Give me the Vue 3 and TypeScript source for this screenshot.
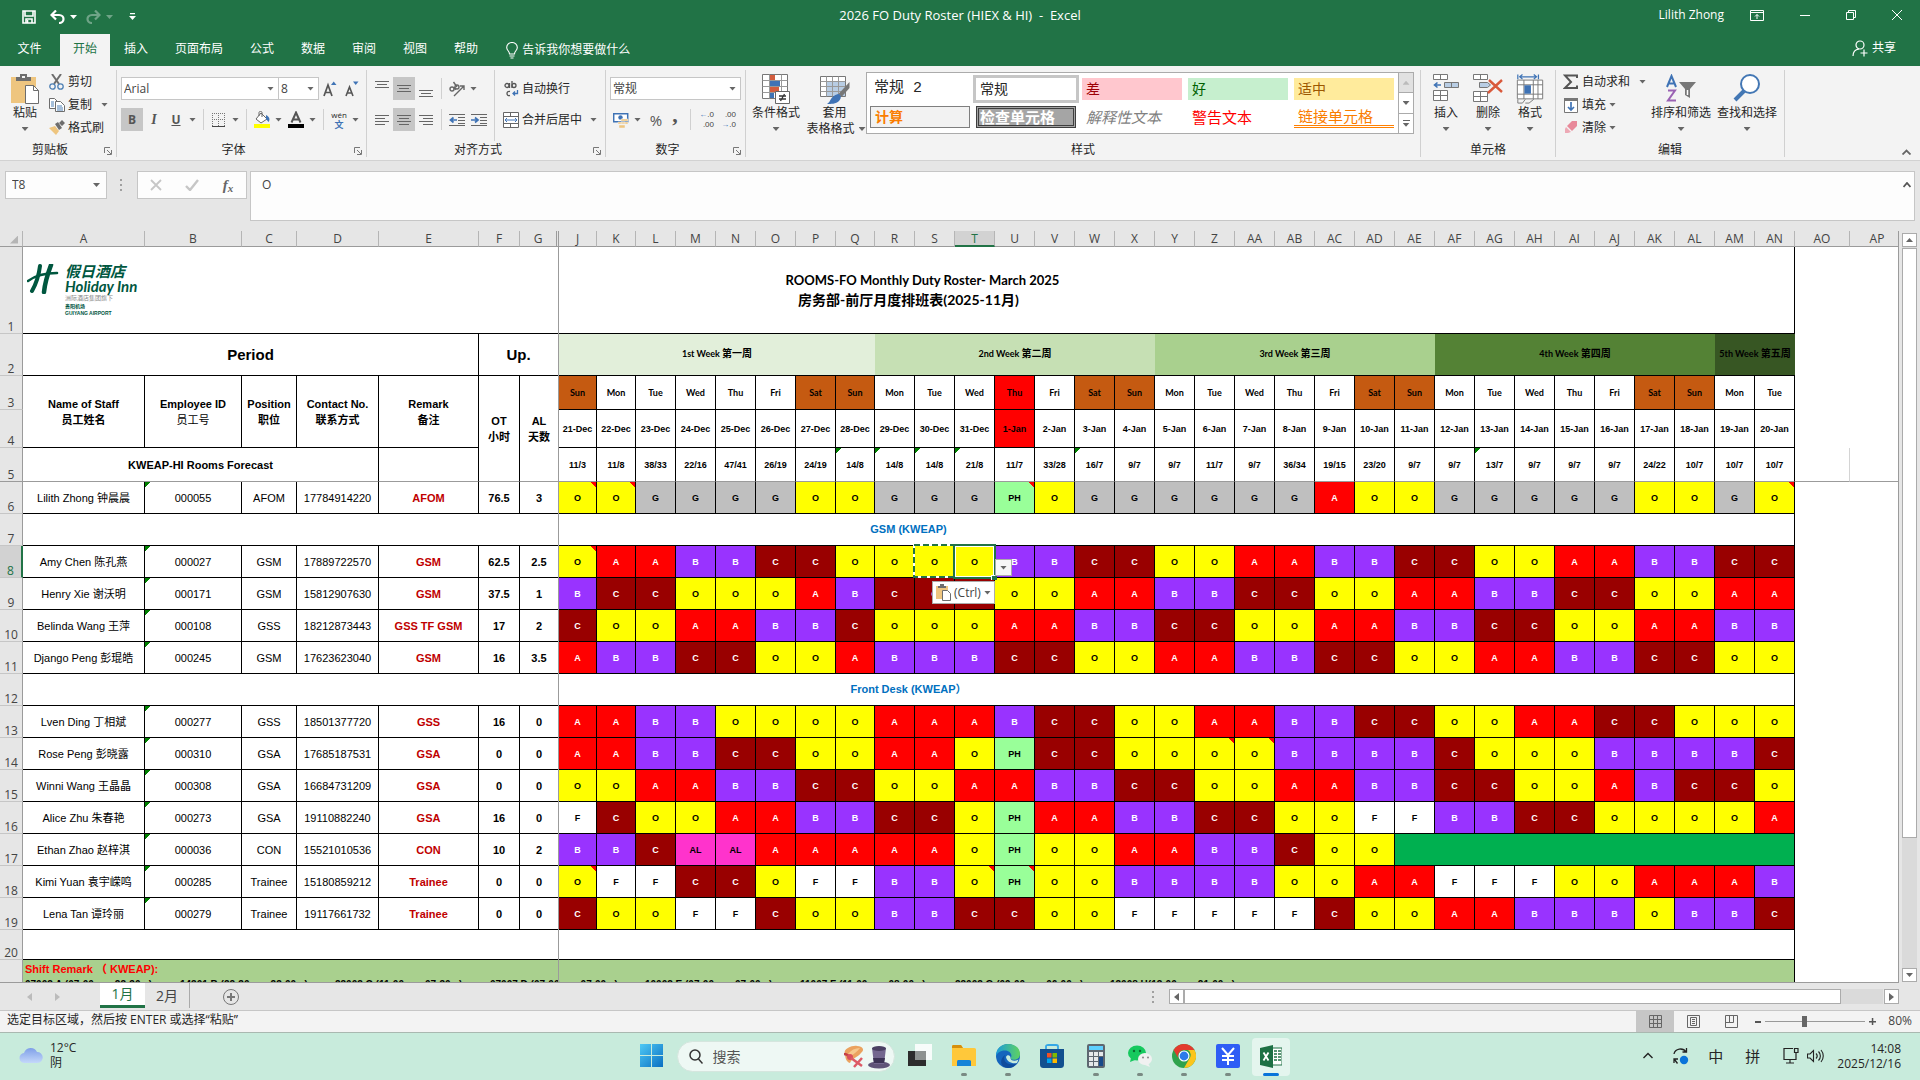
<script setup lang="ts">
import { ref } from 'vue'

interface Staff {
  row: number
  name: string
  id: string
  position: string
  phone: string
  remark: string
  ot: string
  al: string
  shifts: string[]
  notes: number[]
}

interface Column {
  key: string
  width: number
}

const leadColumns: Column[] = [
  { key: 'A', width: 122 }, { key: 'B', width: 97 }, { key: 'C', width: 55 }, { key: 'D', width: 82 },
  { key: 'E', width: 100 }, { key: 'F', width: 41 }, { key: 'G', width: 39 },
]
const dayKeys = 'J K L M N O P Q R S T U V W X Y Z AA AB AC AD AE AF AG AH AI AJ AK AL AM AN'.split(' ')
const dayColumns: Column[] = dayKeys.map((key) => ({
  key,
  width: key === 'J' ? 38 : key === 'K' || key === 'Q' ? 39 : 40,
}))
const columns = [...leadColumns, ...dayColumns, { key: 'AO', width: 55 }]

const weekdayNames = ['Sun', 'Mon', 'Tue', 'Wed', 'Thu', 'Fri', 'Sat']
const days = dayKeys.map((key, i) => {
  const weekday = weekdayNames[i % 7]
  const date = i < 11 ? `${21 + i}-Dec` : `${i - 10}-Jan`
  return { key, weekday, date, holiday: i === 11, weekend: weekday === 'Sat' || weekday === 'Sun' }
})

const weeks = [
  { text: '1st Week', zh: '第一周', span: 8, cls: 'w1' },
  { text: '2nd Week', zh: '第二周', span: 7, cls: 'w2' },
  { text: '3rd Week', zh: '第三周', span: 7, cls: 'w3' },
  { text: '4th Week', zh: '第四周', span: 7, cls: 'w4' },
  { text: '5th Week', zh: '第五周', span: 2, cls: 'w5' },
]

const forecast = ('11/3 11/8 38/33 22/16 47/41 26/19 24/19 14/8 14/8 14/8 21/8 11/7 33/28 16/7 9/7 9/7 11/7 9/7 ' +
  '36/34 19/15 23/20 9/7 9/7 13/7 9/7 9/7 9/7 24/22 10/7 10/7 10/7').split(' ')
const forecastFlags = [7, 8, 9, 10, 13, 23]

function staff(row: number, name: string, id: string, position: string, phone: string, remark: string,
  ot: string, al: string, shifts: string, notes: number[] = []): Staff {
  return { row, name, id, position, phone, remark, ot, al, shifts: shifts.split(' '), notes }
}

const lines: (Staff | { row: number; section: string })[] = [
  staff(6, 'Lilith Zhong 钟晨晨', '000055', 'AFOM', '17784914220', 'AFOM', '76.5', '3',
    'O O G G G G O O G G G PH O G G G G G G A O O G G G G G O O G O', [0, 1, 11, 30]),
  { row: 7, section: 'GSM (KWEAP)' },
  staff(8, 'Amy Chen 陈孔燕', '000027', 'GSM', '17889722570', 'GSM', '62.5', '2.5',
    'O A A B B C C O O O O B B C C O O A A B B C C O O A A B B C C', [0]),
  staff(9, 'Henry Xie 谢沃明', '000171', 'GSM', '15812907630', 'GSM', '37.5', '1',
    'B C C O O O A B C C C O O A A B B C C O O A A B B C C O O A A'),
  staff(10, 'Belinda Wang 王萍', '000108', 'GSS', '18212873443', 'GSS TF GSM', '17', '2',
    'C O O A A B B C O O O A A B B C C O O A A B B C C O O A A B B'),
  staff(11, 'Django Peng 彭琨皓', '000245', 'GSM', '17623623040', 'GSM', '16', '3.5',
    'A B B C C O O A B B B C C O O A A B B C C O O A A B B C C O O'),
  { row: 12, section: 'Front Desk (KWEAP）' },
  staff(13, 'Lven Ding 丁相斌', '000277', 'GSS', '18501377720', 'GSS', '16', '0',
    'A A B B O O O O A A A B C C O O A A B B C C O O A A C C O O O'),
  staff(14, 'Rose Peng 彭晓露', '000310', 'GSA', '17685187531', 'GSA', '0', '0',
    'A A B B C C O O A A O PH C C O O O O B B B B C O O O B B B B C', [16, 17]),
  staff(15, 'Winni Wang 王晶晶', '000308', 'GSA', '16684731209', 'GSA', '0', '0',
    'O O A A B B C C O O A A B B C C O O A A B B C C O O A B C C O'),
  staff(16, 'Alice Zhu 朱春艳', '000273', 'GSA', '19110882240', 'GSA', '16', '0',
    'F C O O A A B B C C O PH A A B B C C O O F F B B C C O O O O A'),
  staff(17, 'Ethan Zhao 赵梓淇', '000036', 'CON', '15521010536', 'CON', '10', '2',
    'B B C AL AL A A A A A O PH O O A A B B C O O'),
  staff(18, 'Kimi Yuan 袁宇嵘鸣', '000285', 'Trainee', '15180859212', 'Trainee', '0', '0',
    'O F F C C O F F B B O PH O O B B B B O O A A F F F O O A A A B', [0, 10, 11]),
  staff(19, 'Lena Tan 谭玲丽', '000279', 'Trainee', '19117661732', 'Trainee', '0', '0',
    'C O O F F C O O B B C C O O F F F F F C O O A A B B B O B B C'),
]

const shiftCodes = [
  '07003 A (07:00  —  23:30   )', '14301 B (22:30  —  23:00   )', '23003 C (11:00  —  07:30   )', '07007 D (07:00  —  07:00   )',
  '10003 E (07:00  —  07:00   )', '11007 F (11:00  —  08:00   )', '23003 G (09:00  —  06:00   )', '13008 H(13:00  —  21:00   )',
]

const tabs = ['插入', '页面布局', '公式', '数据', '审阅', '视图', '帮助']
const cellStyles = [
  { text: '常规 2', cls: 'plain2' }, { text: '常规', cls: 'normal' }, { text: '差', cls: 'bad' },
  { text: '好', cls: 'good' }, { text: '适中', cls: 'neutral' }, { text: '计算', cls: 'calc' },
  { text: '检查单元格', cls: 'check' }, { text: '解释性文本', cls: 'explain' },
  { text: '警告文本', cls: 'warn' }, { text: '链接单元格', cls: 'linked' },
]

const formula = ref('O')
const zoom = ref(39)
const keyword = ref('')
</script>

<template>
  <div class="app">
    <header class="title-bar">
      <div class="quick">
        <button aria-label="保存"><svg width="14" height="14" viewBox="0 0 14 14" fill="none" stroke="#fff" stroke-width="1.6"><path d="M1 1h12v12H1zM3 1v5h8V1M4 13V9h6v4" /><path d="M5.5 10v3" /></svg></button>
        <button aria-label="撤消" class="undo"><svg width="15" height="14" viewBox="0 0 15 14" fill="none" stroke="#fff" stroke-width="2.200"><path d="M6 .5L1.500 5 6 9.500M1.500 5H9c6 0 6 8 0 8" /></svg><i class="dd white"></i></button>
        <button aria-label="恢复" class="redo"><svg width="15" height="14" viewBox="0 0 15 14" fill="none" stroke="#fff" stroke-width="2.200"><path d="M9 .5L13.500 5 9 9.500M13.500 5H6c-6 0-6 8 0 8" /></svg><i class="dd white"></i></button>
        <button aria-label="自定义快速访问工具栏" class="custom"><svg width="7" height="8" viewBox="0 0 7 8"><path d="M1 0h5v1.200H1zM0 3h7L3.500 7z" fill="#fff" /></svg></button>
      </div>
      <h1>2026 FO Duty Roster (HIEX &amp; HI)&nbsp; -&nbsp; Excel</h1>
      <div class="window-tools">
        <span class="user">Lilith Zhong</span>
        <button aria-label="功能区显示选项"><svg width="14" height="12" viewBox="0 0 14 12" fill="none" stroke="#fff"><path d="M.5 1.500h13v10H.5zM.5 3.500h13M7 10V5.500M5 7.500l2-2 2 2" /></svg></button>
        <button aria-label="最小化"><svg width="10" height="10" viewBox="0 0 10 10" stroke="#fff"><path d="M0 5.500h10" /></svg></button>
        <button aria-label="还原"><svg width="10" height="10" viewBox="0 0 10 10" fill="none" stroke="#fff"><path d="M.5 2.500h7v7h-7zM2.500 2.500v-2h7v7h-2" /></svg></button>
        <button aria-label="关闭"><svg width="10" height="10" viewBox="0 0 10 10" stroke="#fff"><path d="M0 0l10 10M10 0L0 10" /></svg></button>
      </div>
    </header>

    <nav class="tabs">
      <button class="file">文件</button>
      <button class="active">开始</button>
      <button v-for="tab in tabs" :key="tab">{{ tab }}</button>
      <button class="tell"><svg width="12" height="17" viewBox="0 0 12 17" fill="none" stroke="#fff" stroke-width="1.100"><path d="M3.500 12c0-3-2.800-3.500-2.800-6.500a5.300 5 0 0 1 10.600 0c0 3-2.800 3.500-2.800 6.500zM3.500 14h5M4.500 16h3" /></svg>告诉我你想要做什么</button>
      <button class="share"><svg width="16" height="17" viewBox="0 0 16 17" fill="none" stroke="#fff" stroke-width="1.200"><circle cx="8" cy="5" r="4" /><path d="M1 16c0-4 2.500-6.500 6-7M12 9.500v7M8.500 13H15.500" /></svg>共享</button>
    </nav>

    <section class="ribbon">
      <div class="group clip">
        <div class="body">
          <button class="big paste">
            <svg width="28" height="30" viewBox="0 0 28 30"><path d="M0 3h25v26H0z" fill="#eec57f" /><path d="M5 7V3h4V0h7v3h4v4z" fill="#6d6d6d" /><rect x="11" y="2" width="3" height="2" fill="#f3f3f3" /><path d="M14.500 11.500h8l5 5v13h-13z" fill="#fff" stroke="#6d6d6d" /><path d="M22.500 11.500v5h5" fill="none" stroke="#6d6d6d" /></svg>
            <span>粘贴</span><i class="dd"></i>
          </button>
          <div class="stack">
            <button><svg width="16" height="16" viewBox="0 0 16 16" fill="none"><path d="M3 0l7 10M12 0L5 10" stroke="#6d6d6d" stroke-width="2" /><circle cx="3.500" cy="12.500" r="2.700" stroke="#4e80b5" stroke-width="1.300" /><circle cx="11.500" cy="12.500" r="2.700" stroke="#4e80b5" stroke-width="1.300" /></svg>剪切</button>
            <button><svg width="16" height="16" viewBox="0 0 16 16" fill="#fff" stroke="#6d6d6d"><path d="M.5 1.500h5l3 3v7h-8z" /><path d="M6.500 4.500h5l4 4v6h-9z" /><path d="M2 5h3M2 7h3M2 9h3M8 9h5M8 11h6M8 13h6" stroke="#4e80b5" /></svg>复制<i class="dd far"></i></button>
            <button><svg width="16" height="16" viewBox="0 0 16 16"><path d="M0 8l6-2 4 5-3 4z" fill="#eec57f" /><path d="M6 4l3-2 4 6-3 2zM10 3l3-3 3 3-3 3z" fill="#6d6d6d" /></svg>格式刷</button>
          </div>
        </div>
        <div class="caption"><span>剪贴板</span><button class="launch" aria-label="剪贴板设置"><svg width="8" height="8" viewBox="0 0 8 8" fill="none" stroke="#777"><path d="M.5 6V.5H6M3 3l4 4M7.500 3v4.500H3" /></svg></button></div>
      </div>

      <div class="group font">
        <div class="body rows">
          <div class="row">
            <label class="combo wide"><select aria-label="字体"><option>Arial</option></select><i class="dd"></i></label>
            <label class="combo small"><select aria-label="字号"><option>8</option></select><i class="dd"></i></label>
            <button class="tb" aria-label="增大字号"><svg width="14" height="16" viewBox="0 0 14 16"><path d="M1 15l4-11 4 11M2.500 11.500h5" fill="none" stroke="#555" stroke-width="1.700" /><path d="M8 4l2.700-3.500L13.500 4z" fill="#3f73b5" /></svg></button>
            <button class="tb" aria-label="减小字号"><svg width="14" height="16" viewBox="0 0 14 16"><path d="M1 15l3.500-9L8 15M2.500 12h4" fill="none" stroke="#555" stroke-width="1.600" /><path d="M8 .5h5.500L10.700 4z" fill="#3f73b5" /></svg></button>
          </div>
          <div class="row">
            <button class="tb on b">B</button><button class="tb it">I</button><button class="tb un">U</button><i class="dd after"></i>
            <i class="sep"></i>
            <button class="split" aria-label="边框"><svg width="16" height="16" viewBox="0 0 16 16"><path d="M1 1.500h13M1.500 1v13M13.500 1v13M7.500 1v13M1 7.500h13" stroke="#777" stroke-dasharray="1 1" /><path d="M1 14.500h13" stroke="#444" /></svg><i class="dd"></i></button>
            <i class="sep"></i>
            <button class="split" aria-label="填充颜色"><svg width="16" height="17" viewBox="0 0 16 17"><path d="M7 2l6 6-6 4-5-4z" fill="#fff" stroke="#666" /><path d="M5 5V1.500c0-1.500 3-1.500 3 0V6" fill="none" stroke="#666" /><path d="M12 4c4 2 4 5 2.500 7L12 8z" fill="#3f73b5" /><path d="M0 13h16v4H0z" fill="#ff0" /></svg><i class="dd"></i></button>
            <button class="split next" aria-label="字体颜色"><svg width="16" height="17" viewBox="0 0 16 17"><path d="M3.500 11.500L8 1.500l4.500 10M5.500 8.500h5" fill="none" stroke="#555" stroke-width="2" /><path d="M0 13h16v4H0z" /></svg><i class="dd"></i></button>
            <i class="sep"></i>
            <button class="split wen" aria-label="拼音"><span><b>wén</b><b class="blue">文</b></span><i class="dd"></i></button>
          </div>
        </div>
        <div class="caption"><span>字体</span><button class="launch" aria-label="字体设置"><svg width="8" height="8" viewBox="0 0 8 8" fill="none" stroke="#777"><path d="M.5 6V.5H6M3 3l4 4M7.500 3v4.500H3" /></svg></button></div>
      </div>

      <div class="group align">
        <div class="body">
          <div class="rows">
            <div class="row">
              <button class="tb" aria-label="顶端对齐"><svg width="14" height="22" viewBox="0 0 14 22" stroke="#666"><path d="M0 3.500h14M2 6.500h10M0 9.500h14" /></svg></button>
              <button class="tb on" aria-label="垂直居中"><svg width="14" height="22" viewBox="0 0 14 22" stroke="#666"><path d="M0 7.500h14M2 10.500h10M0 13.500h14" /></svg></button>
              <button class="tb" aria-label="底端对齐"><svg width="14" height="22" viewBox="0 0 14 22" stroke="#666"><path d="M0 12.500h14M2 15.500h10M0 18.500h14" /></svg></button>
              <i class="sep tight"></i>
              <button class="split" aria-label="方向"><svg width="16" height="16" viewBox="0 0 16 16" fill="none" stroke="#666" stroke-width="1.400"><path d="M5 15L15 5M11 5h4v4" /><circle cx="3" cy="8" r="2" /><path d="M5 6l1.500 3" /><circle cx="8" cy="6" r="2" /><path d="M4.500 1l3.500 5" /></svg><i class="dd"></i></button>
            </div>
            <div class="row">
              <button class="tb" aria-label="左对齐"><svg width="14" height="12" viewBox="0 0 14 12" stroke="#666"><path d="M0 1.500h14M0 4.500h10M0 7.500h14M0 10.500h10" /></svg></button>
              <button class="tb on" aria-label="居中"><svg width="14" height="12" viewBox="0 0 14 12" stroke="#666"><path d="M0 1.500h14M2 4.500h10M0 7.500h14M2 10.500h10" /></svg></button>
              <button class="tb" aria-label="右对齐"><svg width="14" height="12" viewBox="0 0 14 12" stroke="#666"><path d="M0 1.500h14M4 4.500h10M0 7.500h14M4 10.500h10" /></svg></button>
              <i class="sep tight"></i>
              <button class="ic" aria-label="减少缩进"><svg width="16" height="14" viewBox="0 0 16 14"><path d="M0 1.500h16M9 4.500h7M9 7.500h7M9 10.500h7M0 12.500h16" stroke="#666" /><path d="M8 7H2M4.500 4.500L1.500 7l3 2.500" fill="none" stroke="#3f73b5" stroke-width="1.700" /></svg></button>
              <button class="ic next" aria-label="增加缩进"><svg width="16" height="14" viewBox="0 0 16 14"><path d="M0 1.500h16M9 4.500h7M9 7.500h7M9 10.500h7M0 12.500h16" stroke="#666" /><path d="M0 7h6M4 4.500L7 7 4 9.500" fill="none" stroke="#3f73b5" stroke-width="1.700" /></svg></button>
            </div>
          </div>
          <div class="rows wraps">
            <button class="lab"><svg width="16" height="16" viewBox="0 0 16 16" fill="none" stroke="#555" stroke-width="1.300"><circle cx="4" cy="4.500" r="2" /><path d="M6.500 2v5M9 0v7M7 14.500c-4 1-4-5 0-4" /><circle cx="11" cy="4.500" r="2" /><path d="M14.500 9v3.500H10M12 10.500l-2 2 2 2" stroke="#3f73b5" /></svg>自动换行</button>
            <button class="lab"><svg width="16" height="16" viewBox="0 0 16 16" fill="#fff" stroke="#666"><path d="M.5.5h15v15H.5zM.5 4.500h15M.5 11.500h15M7.500.5v4M7.500 11.500v4" /><path d="M2 8h12M4 6L2 8l2 2M12 6l2 2-2 2" fill="none" stroke="#3f73b5" /></svg>合并后居中<i class="dd far"></i></button>
          </div>
        </div>
        <div class="caption"><span>对齐方式</span><button class="launch" aria-label="对齐设置"><svg width="8" height="8" viewBox="0 0 8 8" fill="none" stroke="#777"><path d="M.5 6V.5H6M3 3l4 4M7.500 3v4.500H3" /></svg></button></div>
      </div>

      <div class="group number">
        <div class="body rows">
          <div class="row"><label class="combo fmt"><select aria-label="数字格式"><option>常规</option></select><i class="dd"></i></label></div>
          <div class="row money">
            <button class="split" aria-label="会计数字格式"><svg width="16" height="16" viewBox="0 0 16 16"><path d="M.7 1.700h14v8H.7z" fill="#fff" stroke="#3f73b5" stroke-width="1.500" /><circle cx="7.500" cy="5.500" r="2.200" fill="#3f73b5" /><path d="M8 7h7v2H8zM5 10h7v2H5zM8 10h7v2H8zM6 13h6v3H6z" fill="#eec57f" stroke="#f3f3f3" stroke-width=".5" /></svg><i class="dd"></i></button>
            <button class="pct">%</button><button class="comma">,</button>
            <i class="sep"></i>
            <button class="dec"><span><em>←</em>.0</span><span>.00</span></button>
            <button class="dec"><span>.00</span><span><em>→</em>.0</span></button>
          </div>
        </div>
        <div class="caption"><span>数字</span><button class="launch" aria-label="数字设置"><svg width="8" height="8" viewBox="0 0 8 8" fill="none" stroke="#777"><path d="M.5 6V.5H6M3 3l4 4M7.500 3v4.500H3" /></svg></button></div>
      </div>

      <div class="group styles">
        <div class="body">
          <button class="big cond">
            <svg width="28" height="30" viewBox="0 0 28 30"><path d="M.5.5h25v24H.5z" fill="#fff" stroke="#777" /><path d="M8 1h5v5H8zM8 13h9v5H8z" fill="#d35d3e" /><path d="M8 7h10v5H8zM8 19h4v5H8z" fill="#3f73b5" /><path d="M.5 6.500h25M.5 12.500h25M.5 18.500h25M7.500.5v24M19.500.5v24" stroke="#999" fill="none" /><path d="M13.500 17.500h14v12h-14z" fill="#fff" stroke="#666" /><path d="M17 22h7M17 25h7M22.500 20l-4 7" stroke="#333" stroke-width="1.300" /></svg>
            <span>条件格式</span><i class="dd"></i>
          </button>
          <button class="big table-fmt">
            <svg width="30" height="30" viewBox="0 0 30 30"><path d="M.5 2.500h25v20H.5z" fill="#fff" stroke="#777" /><path d="M7 8h18v14H7z" fill="#b8cde4" /><path d="M.5 7.500h25M.5 12.500h25M.5 17.500h25M6.500 2.500v20M12.500 2.500v20M18.500 2.500v20" stroke="#999" fill="none" /><path d="M29.500 8v6l-8 9-3-3z" fill="#777" /><path d="M18 20c3 0 4 4 1 7-3 3-8 3-12 3 4-2 3-8 11-10z" fill="#3f73b5" /></svg>
            <span>套用</span><span>表格格式<i class="dd"></i></span>
          </button>
          <div class="gallery">
            <button v-for="s in cellStyles" :key="s.text" :class="s.cls">{{ s.text }}</button>
          </div>
          <div class="gallery-scroll">
            <button class="off" aria-label="上一行"><i class="du"></i></button>
            <button aria-label="下一行"><i class="dd"></i></button>
            <button aria-label="其他"><i class="bar"></i><i class="dd"></i></button>
          </div>
        </div>
        <div class="caption"><span>样式</span></div>
      </div>

      <div class="group cells">
        <div class="body">
          <button class="big"><svg width="28" height="30" viewBox="0 0 28 30" fill="#fff" stroke="#777"><path d="M1.500.5h14v5h-14zM8.500.5v5M1.500 16.500h14v10h-14zM8.500 16.500v10M1.500 21.500h14" /><path d="M12.500 8.500h14v5h-14zM19.500 8.500v5" fill="#b8cde4" /><path d="M9 11H3M5.500 8.500L2.500 11l3 2.500" fill="none" stroke="#3f73b5" stroke-width="1.600" /></svg><span>插入</span><i class="dd"></i></button>
          <button class="big"><svg width="30" height="30" viewBox="0 0 30 30" fill="#fff" stroke="#777"><path d="M.5.5h14v5H.5zM7.500.5v5M.5 17.500h14v10H.5zM7.500 17.500v10M.5 22.500h14" /><path d="M6.500 8.500h8l3 2.500-3 2.500h-8z" fill="#b8cde4" /><path d="M16 6l13 12M29 6L15 19" stroke="#d9593b" stroke-width="2.400" /></svg><span>删除</span><i class="dd"></i></button>
          <button class="big"><svg width="28" height="32" viewBox="0 0 28 32" fill="#fff" stroke="#777"><path d="M1 .5v5M23 .5v5M3 3h18M6 .5L3 3l3 2.500M18 .5L21 3l-3 2.500" stroke="#3f73b5" fill="none" stroke-width="1.300" /><path d="M.5 6.500h27v20H.5zM.5 11.500h27M.5 21.500h27M7.500 6.500v20M17.500 6.500v20M22.500 6.500v20" /><path d="M8 12h7v9H8z" fill="#3f73b5" stroke="none" /><path d="M1 27v4h5l3-4M9 31h4l5-4" fill="none" /></svg><span>格式</span><i class="dd"></i></button>
        </div>
        <div class="caption"><span>单元格</span></div>
      </div>

      <div class="group edit">
        <div class="body">
          <div class="stack">
            <button><svg width="16" height="16" viewBox="0 0 16 16" fill="none" stroke="#555" stroke-width="2"><path d="M14 4V1.500H2L8 8l-6 6h12V11.500" /></svg>自动求和<i class="dd far"></i></button>
            <button><svg width="16" height="16" viewBox="0 0 16 16"><path d="M1.500 1.500h13v14h-13z" fill="#fff" stroke="#777" /><path d="M1 1h14v3H1z" fill="#777" /><path d="M8 5v8M5 10l3 3 3-3" fill="none" stroke="#3f73b5" stroke-width="1.700" /></svg>填充<i class="dd"></i></button>
            <button><svg width="16" height="16" viewBox="0 0 16 16"><path d="M9 1h5v5l-5 5-5-5z" fill="#e8899a" /><path d="M3 7l5 5-3 1H2V9z" fill="#eda9b5" /></svg>清除<i class="dd"></i></button>
          </div>
          <button class="big sort"><svg width="30" height="30" viewBox="0 0 30 30" fill="none"><path d="M1 13L5.500 2 10 13M2.500 9.500h6" stroke="#3f73b5" stroke-width="2" /><path d="M2 16.500h7l-7 10h8" stroke="#9a62b3" stroke-width="2" /><path d="M13 8h17l-6 7v9l-5-3v-6z" fill="#777" /><path d="M21.500 16v5" stroke="#fff" stroke-width="1.500" /></svg><span>排序和筛选</span><i class="dd"></i></button>
          <button class="big find"><svg width="28" height="30" viewBox="0 0 28 30" fill="none" stroke="#4377b4"><circle cx="17" cy="10" r="9" fill="#fff" stroke-width="2" /><path d="M11 17L2 26" stroke-width="4" /></svg><span>查找和选择</span><i class="dd"></i></button>
        </div>
        <div class="caption"><span>编辑</span></div>
      </div>
      <button class="collapse" aria-label="折叠功能区"><svg width="9" height="6" viewBox="0 0 9 6" fill="none" stroke="#666" stroke-width="1.800"><path d="M.5 5.500l4-4 4 4" /></svg></button>
    </section>

    <section class="formula-bar">
      <label class="name-box"><input value="T8" aria-label="名称框" /><i class="dd"></i></label>
      <svg class="grip" width="2" height="12" viewBox="0 0 2 12" fill="#a0a0a0"><path d="M0 0h2v2H0zM0 5h2v2H0zM0 10h2v2H0z" /></svg>
      <div class="fx-box">
        <button aria-label="取消"><svg width="12" height="12" viewBox="0 0 12 12" stroke="#c6c6c6" stroke-width="1.800"><path d="M1 1l10 10M11 1L1 11" /></svg></button>
        <button aria-label="输入"><svg width="14" height="12" viewBox="0 0 14 12" fill="none" stroke="#c6c6c6" stroke-width="2.400"><path d="M1 7l4 4 8-10" /></svg></button>
        <button aria-label="插入函数" class="fx">f<small>x</small></button>
      </div>
      <label class="formula"><textarea v-model="formula" aria-label="编辑栏"></textarea><svg width="8" height="6" viewBox="0 0 8 6" fill="none" stroke="#555" stroke-width="1.800"><path d="M.5 5l3.500-4L7.500 5" /></svg></label>
    </section>

    <main class="sheet">
      <div class="viewport">
        <table>
          <colgroup>
            <col class="col-index" />
            <col v-for="c in columns" :key="c.key" :style="{ width: c.width + 'px' }" />
            <col />
          </colgroup>
          <thead>
            <tr>
              <th class="corner"><i></i></th>
              <th v-for="c in columns" :key="c.key" :class="{ picked: c.key === 'T', frozen: c.key === 'G' }">{{ c.key }}</th>
              <th class="last">AP</th>
            </tr>
          </thead>
          <tbody>
            <tr class="h1">
              <th>1</th>
              <td :colspan="38" class="title">
                <span class="first">ROOMS-FO Monthly Duty Roster- March 2025</span>
                <span>房务部-前厅月度排班表(2025-11月)</span>
                <div class="logo">
                  <svg width="32" height="30" viewBox="0 0 32 30" fill="none" stroke="#00573f" stroke-linecap="round"><path d="M13 2C12 10 9 20 5 27" stroke-width="4" /><path d="M24 1c-3 8-6 17-7 27" stroke-width="4.500" /><path d="M1 17c8-6 20-8 29-8" stroke-width="2.600" /></svg>
                  <div><b>假日酒店</b><b class="inn">Holiday Inn</b><small>洲际酒店集团旗下</small><small class="dark">贵阳机场</small><small class="dark">GUIYANG AIRPORT</small></div>
                </div>
              </td>
              <td class="out" colspan="2"></td>
            </tr>
            <tr class="h2">
              <th>2</th>
              <td :colspan="5" class="large">Period</td>
              <td :colspan="2" class="large">Up.</td>
              <td v-for="w in weeks" :key="w.text" :colspan="w.span" class="week" :class="w.cls">{{ w.text }} <span>{{ w.zh }}</span></td>
              <td class="out" colspan="2"></td>
            </tr>
            <tr class="h3">
              <th>3</th>
              <td rowspan="2" class="head">Name of Staff<br />员工姓名</td>
              <td rowspan="2" class="head">Employee ID<br /><span class="thin">员工号</span></td>
              <td rowspan="2" class="head">Position<br />职位</td>
              <td rowspan="2" class="head">Contact No.<br />联系方式</td>
              <td rowspan="2" class="head">Remark<br />备注</td>
              <td rowspan="3" class="head edge">OT<br />小时</td>
              <td rowspan="3" class="head edge">AL<br />天数</td>
              <td v-for="d in days" :key="d.key" class="day" :class="{ weekend: d.weekend, holiday: d.holiday }">{{ d.weekday }}</td>
              <td class="out" colspan="2"></td>
            </tr>
            <tr class="h4">
              <th>4</th>
              <td v-for="d in days" :key="d.key" class="date" :class="{ holiday: d.holiday }">{{ d.date }}</td>
              <td class="out" colspan="2"></td>
            </tr>
            <tr class="h5">
              <th>5</th>
              <td colspan="4" class="head">KWEAP-HI Rooms Forecast</td>
              <td></td>
              <td v-for="(f, i) in forecast" :key="i" class="date" :class="{ flag: forecastFlags.includes(i) }">{{ f }}</td>
              <td class="out grid"></td>
              <td class="out"></td>
            </tr>
            <tr v-for="line in lines" :key="line.row" class="hn">
              <th :class="{ picked: line.row === 8 }">{{ line.row }}</th>
              <td v-if="'section' in line" colspan="38" class="section">{{ line.section }}</td>
              <template v-else>
                <td>{{ line.name }}</td>
                <td class="flag">{{ line.id }}</td>
                <td>{{ line.position }}</td>
                <td>{{ line.phone }}</td>
                <td class="remark">{{ line.remark }}</td>
                <td class="bold">{{ line.ot }}</td>
                <td class="bold">{{ line.al }}</td>
                <td v-for="(s, i) in line.shifts" :key="i" class="shift" :class="['s-' + s, { note: line.notes.includes(i) }]">
                  {{ s }}
                  <svg v-if="line.row === 8 && i === 9" class="ants" width="42" height="34" viewBox="0 0 42 34" fill="none" stroke-width="2"><path d="M1 1h40v32H1z" stroke="#fff" /><path d="M1 1h40v32H1z" stroke="#217346" stroke-dasharray="6 3" /></svg>
                  <div v-if="line.row === 8 && i === 10" class="cursor">
                    <i class="handle"></i>
                    <button class="pick" aria-label="下拉列表"><i class="dd"></i></button>
                    <button class="paste-options"><svg width="15" height="17" viewBox="0 0 15 17"><path d="M0 2h12v13H0z" fill="#eec57f" /><path d="M2 4V2h2V0h4v2h2v2z" fill="#6d6d6d" /><path d="M6.500 6.500h5l3 3v7h-8z" fill="#fff" stroke="#6d6d6d" /></svg>(Ctrl)<i class="dd"></i></button>
                  </div>
                </td>
                <td v-if="line.shifts.length < dayKeys.length" :colspan="dayKeys.length - line.shifts.length" class="left"></td>
              </template>
              <td class="out" colspan="2"></td>
            </tr>
            <tr class="h20">
              <th>20</th>
              <td colspan="38"></td>
              <td class="out" colspan="2"></td>
            </tr>
            <tr class="h21">
              <th>21</th>
              <td colspan="38" class="legend"><strong>Shift Remark （ KWEAP):</strong><div><span v-for="c in shiftCodes" :key="c">{{ c }}</span></div></td>
              <td class="out" colspan="2"></td>
            </tr>
          </tbody>
        </table>
        <i class="freeze"></i>
      </div>
      <div class="vscroll">
        <button aria-label="向上滚动"><i class="du"></i></button>
        <div class="track"><div class="thumb"></div></div>
        <button aria-label="向下滚动"><i class="dd"></i></button>
      </div>
    </main>

    <section class="sheet-tabs">
      <button class="nav" aria-label="上一张"><svg width="5" height="8" viewBox="0 0 5 8"><path d="M5 0v8L0 4z" fill="#bbb" /></svg></button>
      <button class="nav" aria-label="下一张"><svg width="5" height="8" viewBox="0 0 5 8"><path d="M0 0v8l5-4z" fill="#bbb" /></svg></button>
      <button class="tab current">1月</button>
      <button class="tab">2月</button>
      <button class="add" aria-label="新工作表"><svg width="16" height="16" viewBox="0 0 16 16" fill="none" stroke="#777"><circle cx="8" cy="8" r="7.500" /><path d="M8 4v8M4 8h8" stroke-width="2" /></svg></button>
      <svg class="grip" width="2" height="12" viewBox="0 0 2 12" fill="#a0a0a0"><path d="M0 0h2v2H0zM0 5h2v2H0zM0 10h2v2H0z" /></svg>
      <div class="hscroll">
        <button aria-label="向左滚动"><svg width="5" height="8" viewBox="0 0 5 8"><path d="M5 0v8L0 4z" fill="#666" /></svg></button>
        <div class="track"><div class="thumb"></div></div>
        <button aria-label="向右滚动"><svg width="5" height="8" viewBox="0 0 5 8"><path d="M0 0v8l5-4z" fill="#666" /></svg></button>
      </div>
    </section>

    <footer class="status">
      <span class="msg">选定目标区域，然后按 ENTER 或选择“粘贴”</span>
      <button class="view on" aria-label="普通"><svg width="13" height="13" viewBox="0 0 13 13" fill="none" stroke="#666"><path d="M.5.5h12v12H.5zM4.500.5v12M8.500.5v12M.5 4.500h12M.5 8.500h12" /></svg></button>
      <button class="view" aria-label="页面布局"><svg width="13" height="13" viewBox="0 0 13 13" fill="none" stroke="#666"><path d="M.5.5h12v12H.5zM3.500 2.500h6v8h-6zM5 4.500h3M5 6.500h3M5 8.500h3" /></svg></button>
      <button class="view" aria-label="分页预览"><svg width="13" height="13" viewBox="0 0 13 13" fill="none" stroke="#666"><path d="M.5.5h12v12H.5zM.5 7.500h8v-7M4.500.5v7" /></svg></button>
      <div class="zoom">
        <button aria-label="缩小"><svg width="6" height="8" viewBox="0 0 6 8"><path d="M0 3h6v2H0z" fill="#555" /></svg></button>
        <input v-model="zoom" type="range" min="0" max="100" aria-label="缩放" />
        <button aria-label="放大"><svg width="7" height="7" viewBox="0 0 7 7"><path d="M0 3h7v1.500H0zM2.800 0h1.500v7H2.800z" fill="#555" /></svg></button>
      </div>
      <span class="pctg">80%</span>
    </footer>

    <footer class="taskbar">
      <div class="side weather">
        <svg width="24" height="18" viewBox="0 0 24 18"><defs><linearGradient id="cl" x1="0" y1="0" x2="0" y2="1"><stop offset="0" stop-color="#7f9fe8" /><stop offset="1" stop-color="#c4d8fa" /></linearGradient></defs><path d="M6 17a5 5 0 0 1-1-10 7 7 0 0 1 13-1 5.500 5.500 0 0 1 .5 11z" fill="url(#cl)" /></svg>
        <p><span>12°C</span><span>阴</span></p>
      </div>
      <div class="apps">
        <button class="app-icon win" aria-label="开始菜单"><svg width="23" height="23" viewBox="0 0 23 23"><defs><linearGradient id="wn" x1="0" y1="0" x2="1" y2="1"><stop offset="0" stop-color="#4fc9f5" /><stop offset="1" stop-color="#0a6fc2" /></linearGradient></defs><path d="M0 0h11v11H0zM12 0h11v11H12zM0 12h11v11H0zM12 12h11v11H12z" fill="url(#wn)" /></svg></button>
        <label class="search">
          <svg width="14" height="15" viewBox="0 0 14 15" fill="none" stroke="#333" stroke-width="1.500"><circle cx="6" cy="6" r="5" /><path d="M9.500 10l4 4.500" /></svg>
          <input v-model="keyword" placeholder="搜索" aria-label="搜索" />
          <svg width="48" height="24" viewBox="0 0 48 24"><path d="M2 8c-2-4 8-8 12-7 6 0 8 4 4 7-4 5-9 5-11 10-4-1-5-6-5-10z" fill="#eba25f" /><path d="M5 9c3-4 7-6 12-6-3 4-7 6-10 9z" fill="#f6c88d" /><path d="M1 9c2 0 4 1 5 3" fill="none" stroke="#c33f45" stroke-width="2.500" /><circle cx="7" cy="12" r="3" fill="#d9505c" /><path d="M8 13l11 8M11 22l8-9" stroke="#dd5a66" stroke-width="2.500" /><ellipse cx="36" cy="20" rx="11" ry="3.500" fill="#5f5378" /><path d="M29 3h14l-2 16H31z" fill="#73678f" /><path d="M30 13h12l-1 5H31z" fill="#3c3355" /><ellipse cx="36" cy="3.500" rx="7" ry="2.500" fill="#4b4063" /></svg>
        </label>
        <button class="app-icon" aria-label="任务视图"><svg width="24" height="24" viewBox="0 0 24 24"><path d="M0 7h18v15H0z" fill="#2c2c2c" /><path d="M7 0h17v16H7z" fill="#fff" opacity=".85" /><path d="M7 7h11v9H7z" fill="#8d9290" /></svg></button>
        <button class="app-icon run" aria-label="文件资源管理器"><svg width="24" height="24" viewBox="0 0 24 24"><path d="M0 3c0-2 1-2 2-2h7l2 3h11c2 0 2 1 2 2v16H0z" fill="#ffc83a" /><path d="M0 3c0-2 1-2 2-2h7l2 3H0z" fill="#d68f0c" /><path d="M5 22v-4c0-2 1-2 2-2h10c2 0 2 1 2 2v4z" fill="#1583d8" /></svg></button>
        <button class="app-icon run" aria-label="Edge"><svg width="24" height="24" viewBox="0 0 24 24"><defs><linearGradient id="eg" x1="0" y1="0" x2="1" y2="0"><stop offset="0" stop-color="#1b9bdc" /><stop offset="1" stop-color="#5fd35f" /></linearGradient></defs><circle cx="12" cy="12" r="12" fill="#1565bd" /><path d="M0 12C0 4 6 0 12 0c8 0 12 5 12 10 0 6-7 7-9.500 4.500C17 11 14 6.500 9 6.500 4 6.500 1 9 0 12z" fill="url(#eg)" /><path d="M9 11c-3 6 3 12 12 8-2 3-5 5-9 5-8 0-9-9-3-13z" fill="#0f4c9c" /><path d="M14.500 14.500C15.500 17 19 17.500 22.500 15.500L21 19c-5 1-10-1-11-6 1-3 5-2 4.500 1.500z" fill="#c8ebdc" /></svg></button>
        <button class="app-icon" aria-label="Microsoft Store"><svg width="24" height="24" viewBox="0 0 24 24"><path d="M6 6V2.500C6 1 7 1 8 1h8c2 0 2 1 2 1.500V6" fill="none" stroke="#35a7e6" stroke-width="1.800" /><path d="M0 5h24v15c0 3-1 4-4 4H4c-3 0-4-1-4-4z" fill="#12508f" /><path d="M7 9h4.500v4.500H7z" fill="#f25022" /><path d="M12.500 9H17v4.500h-4.500z" fill="#7fba00" /><path d="M7 14.500h4.500V19H7z" fill="#00a4ef" /><path d="M12.500 14.500H17V19h-4.500z" fill="#ffb900" /></svg></button>
        <button class="app-icon run" aria-label="计算器"><svg width="18" height="24" viewBox="0 0 18 24"><rect width="18" height="24" rx="2" fill="#5d6770" /><path d="M2 2h14v4H2z" fill="#5dd0ff" /><path d="M2 8h4v4H2zM7 8h4v4H7zM12 8h4v4h-4zM2 13h4v4H2zM7 13h4v4H7zM2 18h4v4H2zM7 18h4v4H7z" fill="#e4e8ea" /><path d="M12 13h4v9h-4z" fill="#184a8a" /></svg></button>
        <button class="app-icon run" aria-label="微信"><svg width="24" height="22" viewBox="0 0 24 22"><ellipse cx="9" cy="8" rx="9" ry="7.500" fill="#16c95e" /><path d="M3 13l-1 4 5-2z" fill="#16c95e" /><ellipse cx="17" cy="14" rx="7" ry="6" fill="#f1f1f1" /><path d="M20 18l2 4-5-2z" fill="#f1f1f1" /><circle cx="6" cy="6" r="1.200" fill="#0a6b30" /><circle cx="12" cy="6" r="1.200" fill="#0a6b30" /><circle cx="15" cy="12.500" r="1" fill="#888" /><circle cx="20" cy="12.500" r="1" fill="#888" /></svg></button>
        <button class="app-icon run" aria-label="Chrome"><svg width="24" height="24" viewBox="0 0 24 24"><circle cx="12" cy="12" r="12" fill="#2fa24c" /><path d="M1.600 6A12 12 0 0 1 22.400 6H12a6 6 0 0 0-5.200 9z" fill="#e33b2e" /><path d="M22.400 6A12 12 0 0 1 12 24l5.200-9A6 6 0 0 0 16 6z" fill="#fcc51c" /><circle cx="12" cy="12" r="5.500" fill="#fff" /><circle cx="12" cy="12" r="4.400" fill="#2c7bea" /></svg></button>
        <button class="app-icon run" aria-label="财务"><svg width="24" height="24" viewBox="0 0 24 24"><rect width="24" height="24" rx="2" fill="#2f5df5" /><path d="M6 4l6 7 6-7M12 11v10M6 12h12M6 16h12" fill="none" stroke="#fff" stroke-width="2" /></svg></button>
        <button class="app-icon run open" aria-label="Excel"><svg width="22" height="23" viewBox="0 0 22 23"><path d="M12 3h10v17H12z" fill="#fff" stroke="#217346" /><path d="M14 6h3M18 6h3M14 9h3M18 9h3M14 12h3M18 12h3M14 15h3M18 15h3" stroke="#217346" stroke-width="1.500" /><path d="M0 3l13-3v23L0 20z" fill="#1d7044" /><path d="M3.500 7.500l5 8M8.500 7.500l-5 8" stroke="#fff" stroke-width="1.800" /></svg></button>
      </div>
      <div class="side tray">
        <svg width="10" height="7" viewBox="0 0 10 7" fill="none" stroke="#222" stroke-width="1.400"><path d="M.5 6L5 1.500 9.500 6" /></svg>
        <svg width="17" height="18" viewBox="0 0 17 18" fill="none" stroke="#222" stroke-width="1.300"><path d="M2 7a6.500 6 0 0 1 12-2M14.500 1v4h-4M2 16v-4h4M2.500 12.500l3 4" /><circle cx="12" cy="13" r="4.200" fill="#0a74da" stroke="none" /></svg>
        <span class="ime">中</span><span class="ime">拼</span>
        <div class="pair">
          <svg width="17" height="17" viewBox="0 0 17 17" fill="none" stroke="#222" stroke-width="1.200"><path d="M11 1.500H2v11h12V8M4 16h8M8 13v3M12.500 1.500h3.500v4h-3.500zM14 6v5" /></svg>
          <svg width="17" height="14" viewBox="0 0 17 14" fill="none" stroke="#222" stroke-width="1.100"><path d="M.5 5h2.500l3.500-3.500v11L3 9H.5zM9 4.500c1.500 1.500 1.500 3.500 0 5M11.500 2.500c2.500 2.500 2.500 6.500 0 9M14 1c3 3.500 3 8.500 0 12" /></svg>
        </div>
        <p class="clock"><span>14:08</span><span>2025/12/16</span></p>
      </div>
    </footer>
  </div>
</template>

<style>
body { margin: 0; }
</style>

<style scoped>
* { box-sizing: border-box; }
.app { --ui: "Open Sans", "Noto Sans CJK SC", sans-serif; --line: #d0d0d0; display: flex; flex-direction: column; height: 100vh; overflow: hidden; background: #e6e6e6; color: #262626; font: 12px/16px var(--ui); }
button { padding: 0; border: 0; background: none; color: inherit; font: inherit; display: flex; align-items: center; justify-content: center; white-space: nowrap; }
input, select, textarea { font: inherit; color: inherit; border: 0; padding: 0; background: none; appearance: none; outline: none; min-width: 0; resize: none; }
svg { display: block; flex: none; }
p { margin: 0; }
.dd, .du { flex: none; width: 7px; height: 4px; background: #666; clip-path: polygon(0 0, 100% 0, 50% 100%); }
.du { clip-path: polygon(50% 0, 100% 100%, 0 100%); }
.dd.white { background: #fff; }

.title-bar { display: grid; grid-template-columns: 1fr auto 1fr; align-items: center; height: 34px; flex: none; background: #217346; color: #fff; padding-bottom: 4px; }
.title-bar h1 { margin: 0; font-size: 13px; line-height: 16px; font-weight: 400; }
.quick { display: flex; align-items: center; padding: 4px 0 0 22px; gap: 14px; }
.quick button { gap: 5px; }
.quick .redo { opacity: .35; margin-left: -5px; }
.quick .custom { padding-left: 2px; }
.window-tools { display: flex; align-items: center; justify-content: flex-end; padding-right: 18px; gap: 36px; }
.user { margin-right: -10px; }
.tabs { display: flex; flex: none; height: 32px; background: #217346; color: #fff; gap: 1px; }
.tabs button { padding: 0 13px 2px; }
.tabs .file { width: 59px; padding: 0 0 2px; }
.tabs .active { background: #f3f3f3; color: #217346; }
.tabs .tell { gap: 4px; padding-left: 14px; padding-bottom: 0; }
.tabs .share { margin-left: auto; padding-right: 24px; gap: 4px; padding-bottom: 4px; }

.ribbon { display: flex; flex: none; height: 95px; padding-top: 4px; background: #f3f3f3; border-bottom: 1px solid #d2d2d2; }
.group { display: flex; flex-direction: column; height: 87px; border-right: 1px solid var(--line); flex: none; }
.body { display: flex; height: 71px; flex: none; }
.caption { display: flex; align-items: center; height: 16px; flex: none; }
.caption span { flex: 1; text-align: center; padding-top: 2px; }
.launch { padding: 4px 4px 0; }
.clip { width: 117px; } .font { width: 250px; } .align { width: 239px; } .number { width: 140px; } .styles { width: 675px; } .cells { width: 135px; } .edit { width: 229px; }
.big { flex-direction: column; justify-content: flex-start; padding-top: 4px; width: 42px; align-self: flex-start; }
.big svg { height: 30px; }
.big span { line-height: 16px; height: 18px; display: flex; align-items: center; gap: 4px; }
.big > .dd { margin-top: 5px; }
.big.table-fmt { width: 63px; } .big.table-fmt span + span { height: 14px; padding: 0 0 0 3px; }
.big.cond { width: 54px; margin-left: 3px; }
.big.paste { margin-left: 4px; }
.stack { display: flex; flex-direction: column; padding-left: 3px; }
.stack button { height: 23px; gap: 3px; justify-content: flex-start; }
.stack .dd.far { margin-left: 6px; }
.rows { display: flex; flex-direction: column; gap: 8px; padding-top: 7px; padding-left: 4px; }
.row { display: flex; align-items: center; height: 23px; }
.combo { display: flex; align-items: center; height: 23px; border: 1px solid #c6c6c6; background: #fff; padding: 0 4px 0 2px; color: #444; }
.combo select { flex: 1; line-height: 20px; height: 20px; }
.combo.wide { width: 158px; margin-right: -1px; } .combo.small { width: 41px; } .combo.fmt { width: 131px; }
.tb { width: 22px; height: 23px; color: #555; }
.on { background: #c6c6c6; }
.b { font-weight: 700; } .it { font: italic bold 14px "Liberation Serif", serif; } .un { text-decoration: underline; font-weight: 700; }
.dd.after { margin-left: 2px; }
.sep { width: 1px; height: 21px; background: var(--line); margin: 0 7px; flex: none; }
.sep.tight { margin-left: 4px; }
.split { gap: 5px; }
.next { margin-left: 6px; }
.wen span { display: flex; flex-direction: column; align-items: center; width: 16px; }
.wen b { font-size: 8px; line-height: 9px; font-weight: 400; } .wen .blue { color: #3f73b5; font-weight: 700; font-size: 9px; line-height: 11px; }
.body > .wraps { margin-left: 7px; padding-left: 8px; border-left: 1px solid var(--line); }
.lab { height: 23px; gap: 3px; justify-content: flex-start; }
.lab .far { margin-left: 5px; }
.money { padding-left: 3px; }
.pct { font-size: 15px; width: 14px; margin-left: 8px; color: #555; } .comma { width: 20px; font: bold 22px/12px "Liberation Serif", serif; padding: 0 4px 10px 8px; color: #555; }
.dec { flex-direction: column; align-items: flex-end; width: 16px; margin-right: 6px; font: 8px/10px "Liberation Sans", sans-serif; color: #444; }
.dec em { color: #3f73b5; font-style: normal; }

.gallery { display: grid; grid-template-columns: repeat(5, 100px); grid-template-rows: 22px 22px; gap: 6px; width: 533px; height: 62px; margin: 2px 0 0; padding: 5px 0 0 3px; background: #fff; border: 1px solid #ababab; font-size: 14px; }
.gallery button { justify-content: flex-start; padding-left: 4px; }
.gallery .plain2 { font-family: "Liberation Mono", "Noto Sans CJK SC", monospace; font-size: 15px; }
.gallery .normal { box-shadow: 0 0 0 3px #c6c6c6; }
.gallery .bad { background: #ffc7ce; color: #9c0006; }
.gallery .good { background: #c6efce; color: #006100; }
.gallery .neutral { background: #ffeb9c; color: #9c5700; }
.gallery .calc { background: #f2f2f2; border: 1px solid #7f7f7f; color: #fa7d00; font-weight: 700; }
.gallery .check { background: #a5a5a5; border: 3px double #3f3f3f; color: #fff; font-weight: 700; padding-left: 1px; font-size: 15px; }
.gallery .explain { color: #7f7f7f; font-style: italic; font-size: 15px; }
.gallery .warn { color: #f00; font-size: 15px; }
.gallery .linked { color: #fa7d00; border-bottom: 3px double #ff8001; font-size: 15px; }
.gallery-scroll { display: flex; flex-direction: column; width: 15px; height: 62px; margin-top: 2px; border: 1px solid #ababab; border-left: 0; background: #fff; }
.gallery-scroll button { flex: 1; flex-direction: column; gap: 2px; }
.gallery-scroll button + button { border-top: 1px solid #ababab; }
.gallery-scroll .off { background: #e1e1e1; } .off .du { background: #bbb; }
.bar { width: 7px; height: 1px; background: #666; }
.cells .body { padding-left: 4px; }
.edit .stack { padding-left: 7px; width: 92px; }
.edit .sort, .edit .find { width: 66px; }
.collapse { margin-left: auto; align-self: flex-end; padding: 0 9px 5px 0; }

.formula-bar { display: flex; align-items: flex-start; flex: none; height: 70px; padding: 10px 5px 0; }
.name-box { display: flex; align-items: center; width: 102px; height: 28px; border: 1px solid #c6c6c6; background: #fdfdfd; padding: 0 6px; color: #444; }
.name-box input { flex: 1; }
.formula-bar .grip { margin: 8px 15px 0 13px; }
.fx-box { display: flex; width: 110px; height: 28px; border: 1px solid #c6c6c6; background: #fdfdfd; margin-right: 3px; }
.fx-box button { flex: 1; }
.fx-box .fx { font: italic bold 15px "Liberation Serif", serif; color: #666; } .fx small { font-size: 11px; padding-top: 5px; }
.formula { display: flex; flex: 1; height: 50px; border: 1px solid #c6c6c6; background: #fdfdfd; padding: 5px 3px 0 11px; }
.formula textarea { flex: 1; height: 40px; color: #444; } .formula svg { margin-top: 5px; }

.sheet { display: flex; flex: 1; min-height: 0; }
.viewport { position: relative; flex: 1; overflow: hidden; border-right: 1px solid #9b9b9b; border-bottom: 1px solid #9b9b9b; background: #fff; }
table { width: 100%; table-layout: fixed; border-collapse: separate; border-spacing: 0; font: 11px/16px "Liberation Sans", "Noto Sans CJK SC", sans-serif; color: #000; }
.col-index { width: 23px; }
th { padding: 0; background: #e6e6e6; font: 12px/13px var(--ui); color: #444; }
thead th { height: 16px; border-right: 1px solid #b5b5b5; border-bottom: 1px solid #9b9b9b; }
thead th.picked { background: #d2d2d2; color: #217346; border-bottom: 2px solid #217346; }
thead th.frozen { border-right: 3px double #9b9b9b; }
thead th.last { border-right: 0; padding-left: 6px; }
.corner i { display: block; width: 8px; height: 8px; margin: 2px 0 0 10px; background: #b5b5b5; clip-path: polygon(100% 0, 100% 100%, 0 100%); }
tbody th { vertical-align: bottom; border-right: 1px solid #9b9b9b; border-bottom: 1px solid #c6c6c6; }
tbody th.picked { background: #d2d2d2; color: #217346; border-right: 2px solid #217346; }
td { padding: 0; text-align: center; white-space: nowrap; border-right: 1px solid #000; border-bottom: 1px solid #000; }
.h1 { height: 87px; } .h2 { height: 42px; } .h3 { height: 34px; } .h4 { height: 38px; } .h5 { height: 34px; } .hn { height: 32px; } .h20 { height: 30px; } .h21 { height: 40px; }
.out { border: 0; }
.out.grid { border-right: 1px solid #d4d4d4; }
.h5 > *, .edge { border-bottom-color: #9b9b9b; }
.h5 .out { border-bottom: 1px solid #9b9b9b; }
.title { position: relative; font: bold 14px/20px Lato, "Noto Sans CJK SC", sans-serif; }
.title > span { display: block; }
.title .first { padding-left: 28px; font-size: 13px; }
.logo { position: absolute; left: 4px; top: 17px; display: flex; gap: 6px; color: #00573f; text-align: left; }
.logo b { display: block; font: italic bold 15px/15px Lato, "Noto Sans CJK SC", sans-serif; }
.logo .inn { line-height: 14px; }
.logo small { display: block; color: #888; font: 6px/10px "Liberation Sans", "Noto Sans CJK SC", sans-serif; }
.logo .dark { color: #00573f; font: bold 5px/7px "Liberation Sans", "Noto Sans CJK SC", sans-serif; }
.large { font-size: 15px; font-weight: 700; }
.head, .bold { font-weight: 700; } .thin { font-weight: 400; }
.week { font: bold 9px/14px Lato, "Noto Sans CJK SC", sans-serif; border-right: 0; padding-bottom: 2px; }
.week span { font-size: 10px; }
.w1 { background: #e2efda; } .w2 { background: #c6e0b4; } .w3 { background: #a9d08e; } .w4 { background: #548235; } .w5 { background: #375623; }
.day { font: bold 9px/12px Lato, sans-serif; }
.date, .shift { font-size: 9px; line-height: 12px; font-weight: 700; }
.weekend { background: #c55a11; } .holiday { background: #f00; }
.section { font-weight: 700; color: #0070c0; padding-bottom: 2px; }
.remark { font-weight: 700; color: #c00000; }
.shift { position: relative; }
.flag { background: linear-gradient(135deg, #008000 4px, transparent 4px); }
.s-O { background-color: #ff0; } .s-G { background-color: #bfbfbf; } .s-PH { background-color: #9f9; } .s-AL { background-color: #f3c; }
.s-A { background-color: #f00; color: #fff; } .s-B { background-color: #93f; color: #fff; } .s-C { background-color: #900; color: #fff; }
.left { background: #00b050; }
.note { background-image: linear-gradient(225deg, #f00 4px, transparent 4px); }
.ants { position: absolute; left: -2px; top: -2px; }
.cursor { position: absolute; z-index: 2; inset: -2px -2px -2px -2px; border: 2px solid #217346; box-shadow: inset 0 0 0 1px #fff; }
.handle { position: absolute; right: -3px; bottom: -3px; width: 6px; height: 5px; background: #217346; border: 1px solid #fff; border-width: 1px 0 0 1px; }
.pick { position: absolute; left: 40px; top: 13px; width: 17px; height: 17px; background: #f7f7f7; border: 1px solid #ababab; }
.paste-options { position: absolute; right: -1px; top: 35px; width: 63px; height: 23px; gap: 3px; background: #fff; border: 1px solid #ababab; color: #444; font: 12px/16px var(--ui); }
.legend { height: 40px; vertical-align: top; text-align: left; background: #a9d08e; font-weight: 700; font-size: 11px; }
.legend strong { display: block; padding-left: 2px; color: #f00; line-height: 18px; }
.legend div { display: flex; font-size: 10px; line-height: 14px; padding-left: 2px; } .legend span { width: 155px; white-space: pre; }
.freeze { position: absolute; left: 558px; top: 16px; bottom: 0; width: 1px; background: #9b9b9b; }

.vscroll { display: flex; flex-direction: column; width: 21px; padding: 2px 3px 1px; }
.vscroll button { height: 14px; background: #fff; border: 1px solid #ababab; }
.vscroll .track { flex: 1; background: #dadada; padding-top: 1px; }
.vscroll .thumb { height: 82%; background: #fff; border: 1px solid #ababab; }

.sheet-tabs { display: flex; align-items: center; flex: none; height: 27px; padding-left: 15px; padding-right: 21px; }
.nav { width: 28px; }
.nav + .tab { margin-left: 29px; }
.tab { width: 45px; height: 25px; align-self: flex-start; font-size: 14px; color: #444; border-right: 1px solid #aaa; }
.tab.current { background: #fff; color: #217346; border-right: 0; border-bottom: 3px solid #217346; }
.add { margin-left: 33px; }
.sheet-tabs .grip { margin-left: auto; margin-right: 15px; }
.hscroll { display: flex; flex: 0 1 730px; height: 15px; }
.hscroll button { width: 15px; border: 1px solid #ababab; background: #fff; }
.hscroll .track { flex: 1; background: #dadada; margin-right: 1px; }
.hscroll .thumb { width: 94%; height: 15px; background: #fff; border: 1px solid #ababab; }

.status { display: flex; align-items: center; flex: none; height: 23px; background: #f3f3f3; border-top: 1px solid #c6c6c6; border-bottom: 1px solid #a9b8b0; padding: 0 8px 0 7px; }
.msg { flex: 1; padding-bottom: 3px; }
.view { width: 38px; height: 21px; }
.zoom { display: flex; align-items: center; margin-left: 5px; gap: 4px; }
.zoom input { width: 100px; height: 14px; background: linear-gradient(#999, #999) 0 6px / 100% 1px no-repeat; margin: 0; }
.zoom input::-webkit-slider-thumb { appearance: none; width: 5px; height: 11px; background: #666; }
.pctg { margin-left: auto; padding-left: 12px; color: #444; padding-bottom: 2px; }

.taskbar { display: flex; align-items: center; flex: none; height: 47px; background: #c8ebdc; }
.side { flex: 1; display: flex; align-items: center; }
.side p { display: flex; flex-direction: column; line-height: 15px; }
.weather { padding-left: 19px; gap: 7px; padding-bottom: 3px; }
.apps { display: flex; align-items: center; height: 47px; padding-right: 3px; }
.app-icon { position: relative; width: 44px; height: 38px; padding-bottom: 2px; }
.app-icon.win { width: 47px; }
.run::after { content: ""; position: absolute; bottom: 0; width: 6px; height: 3px; border-radius: 2px; background: #7a8a83; }
.open { width: 38px; margin-left: 2px; border-radius: 4px; background: #e4f5ee; padding: 0; }
.run.open::after { width: 16px; background: #0a74da; }
.search { display: flex; align-items: center; width: 218px; height: 31px; border-radius: 16px; background: #eef8f4; border: 1px solid #d5e6de; padding: 0 3px 0 11px; margin: 0 3px 0 2px; font-size: 14px; }
.search input { flex: 1; margin-left: 10px; } .search input::placeholder { color: #555; opacity: 1; }
.tray { justify-content: flex-end; padding-right: 19px; gap: 19px; padding-bottom: 2px; }
.ime { font-size: 15px; width: 16px; margin-right: 2px; }
.pair { display: flex; gap: 8px; align-items: center; margin-right: -6px; }
.clock { align-items: flex-end; }
</style>
